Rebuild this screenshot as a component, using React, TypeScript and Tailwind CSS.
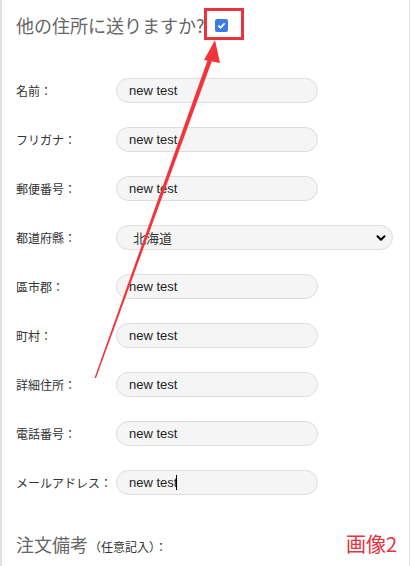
import { ChevronDown } from "lucide-react";

const jp = "font-['Noto_Sans_CJK_JP',sans-serif]";
const en = "font-['Liberation_Sans','Noto_Sans_CJK_JP',sans-serif]";

const rows = [
  { label: "名前：", value: "new test" },
  { label: "フリガナ：", value: "new test" },
  { label: "郵便番号：", value: "new test" },
  { label: "都道府縣：", value: "北海道", select: true },
  { label: "區市郡：", value: "new test" },
  { label: "町村：", value: "new test" },
  { label: "詳細住所：", value: "new test" },
  { label: "電話番号：", value: "new test" },
  { label: "メールアドレス：", value: "new test", caret: true },
];

export default function App() {
  return (
    <div className="relative w-[410px] h-[566px] overflow-hidden bg-white border-l-2 border-r border-[#e0e0e0]">
      <div className="flex items-center h-[50px] px-[14px]">
        <span className={`${jp} text-[18px] text-[#666]`}>他の住所に送りますか?</span>
        <span className="ml-[10px] w-[13px] h-[13px] rounded-[2px] bg-[#3f7be6] flex items-center justify-center">
          <svg width="9" height="9" viewBox="0 0 10 10">
            <path d="M1.5 5.2 L4 7.5 L8.5 2.5" fill="none" stroke="white" strokeWidth="2" />
          </svg>
        </span>
      </div>

      <div className="flex flex-col pt-[16px]">
        {rows.map((r, i) => (
          <div key={i} className="flex items-center h-[49px] px-[14px]">
            <div className={`${jp} w-[100px] text-[12px] text-[#333] whitespace-nowrap`}>{r.label}</div>
            {r.select ? (
              <div className="flex items-center justify-between w-[277px] h-[25px] rounded-full border border-[#ddd] bg-[#f5f5f5] pl-[16px] pr-[4px]">
                <span className={`${jp} text-[13px] text-[#333]`}>{r.value}</span>
                <ChevronDown className="w-[14px] h-[14px] text-black" strokeWidth={3.5} />
              </div>
            ) : (
              <div className="flex items-center w-[202px] h-[25px] rounded-full border border-[#ddd] bg-[#f5f5f5] pl-[12px]">
                <span className={`${en} text-[13px] text-[#222]`}>{r.value}</span>
                {r.caret && <span className="w-px h-[15px] bg-black -ml-[1px]" />}
              </div>
            )}
          </div>
        ))}
      </div>

      <div className="flex items-baseline justify-between pl-[14px] pr-[12px] pt-[22px]">
        <div className="flex items-baseline">
          <span className={`${jp} text-[18px] text-[#666]`}>注文備考</span>
          <span className={`${jp} text-[12px] text-[#333] ml-[1px]`}>（任意記入）：</span>
        </div>
        <span className={`${jp} text-[20px] text-[#e8323c]`}>画像2</span>
      </div>

      <svg className="absolute left-0 top-0 pointer-events-none" width="410" height="566">
        <rect x="203.5" y="9.5" width="37" height="29" fill="none" stroke="#e8323c" strokeWidth="3" />
        <polygon points="92.5,378 94,378 211,58 207,56" fill="#f0353b" />
        <polygon points="213,40 202,60 218,63" fill="#f0353b" />
      </svg>
    </div>
  );
}
